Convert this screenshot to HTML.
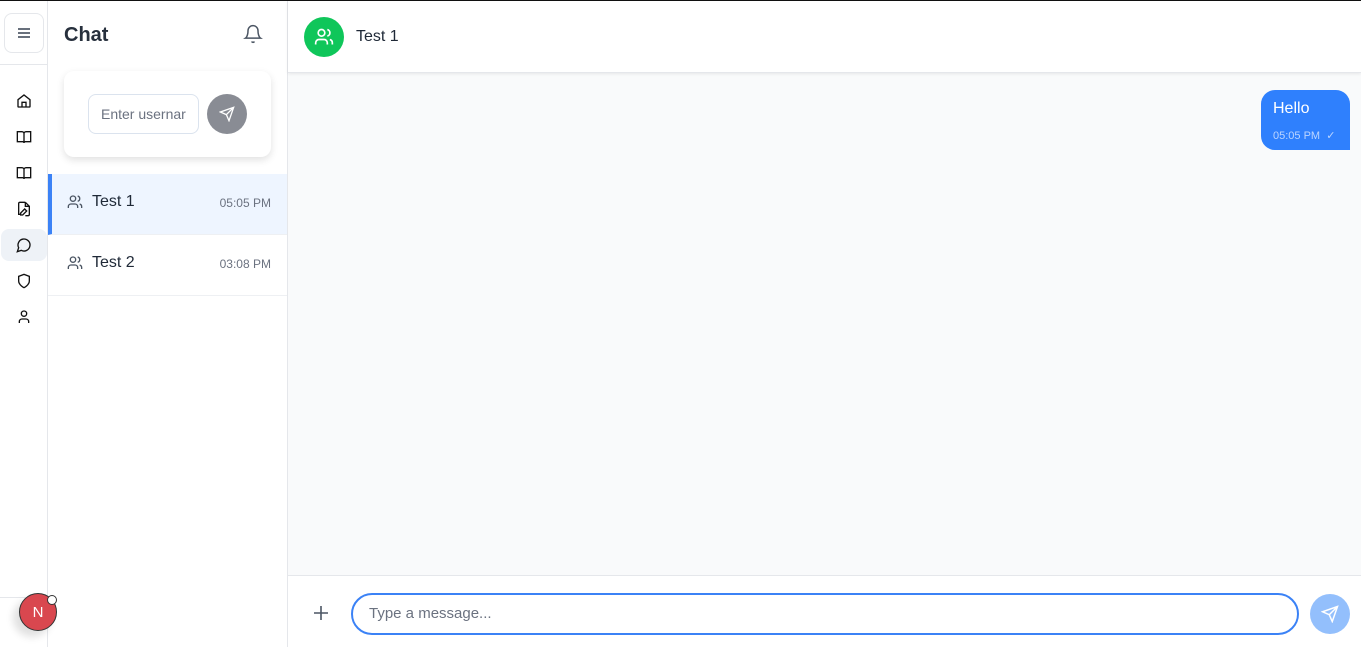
<!DOCTYPE html>
<html><head><meta charset="utf-8"><style>
*{box-sizing:border-box;margin:0;padding:0}
body{width:1361px;height:647px;overflow:hidden;font-family:"Liberation Sans",sans-serif;background:#fff;position:relative;color:#1f2937}
.topline{position:absolute;left:0;top:0;width:1361px;height:1px;background:#111}
.nav{position:absolute;left:0;top:1px;width:48px;height:646px;border-right:1px solid #e5e7eb;background:#fff}
.menu{position:absolute;left:4px;top:12px;width:40px;height:40px;border:1px solid #e5e7eb;border-radius:8px;display:flex;align-items:center;justify-content:center}
.navsep{position:absolute;left:0;top:63px;width:48px;height:1px;background:#e5e7eb}
.ni{position:absolute;left:0;width:48px;height:32px;display:flex;align-items:center;justify-content:center}
.ni.act{background:#eef2f7;border-radius:8px;width:46px;left:1px}
.botsep{position:absolute;left:0;top:596px;width:48px;height:1px;background:#e5e7eb}
.av{position:absolute;left:19px;top:593px;width:38px;height:38px;border-radius:50%;background:#d9474f;border:1px solid #333;color:#fff;font-size:15px;display:flex;align-items:center;justify-content:center;box-shadow:-6px 6px 8px rgba(0,0,0,.12)}
.dot{position:absolute;left:47px;top:595px;width:10px;height:10px;border-radius:50%;background:#fff;border:1px solid #333}
.list{position:absolute;left:48px;top:1px;width:240px;height:646px;border-right:1px solid #e5e7eb}
.title{position:absolute;left:16px;top:23px;font-size:20px;font-weight:bold;color:#27303d}
.bell{position:absolute;left:195px;top:23px}
.card{position:absolute;left:16px;top:70px;width:207px;height:86px;border-radius:10px;background:#fff;box-shadow:0 3px 8px rgba(0,0,0,.12)}
.inp{position:absolute;left:24px;top:23px;width:111px;height:40px;border:1px solid #dbe3ee;border-radius:8px;font-size:14px;color:#6b7280;padding:11px 0 0 12px;white-space:nowrap;overflow:hidden}
.sbtn{position:absolute;left:143px;top:23px;width:40px;height:40px;border-radius:50%;background:#898c94;display:flex;align-items:center;justify-content:center}
.item{position:absolute;left:0;width:239px;height:61px;border-bottom:1px solid #eef0f3}
.item.sel{background:#eef5ff;border-left:4px solid #3b82f6}
.item .nm{position:absolute;left:44px;top:19px;font-size:16px;color:#1f2937}
.item.sel .nm{left:40px}
.item .tm{position:absolute;right:16px;top:22px;font-size:12px;color:#6b7280}
.item .ic{position:absolute;left:19px;top:20px}
.item.sel .ic{left:15px}
.main{position:absolute;left:288px;top:1px;width:1073px;height:646px;background:#f9fafb}
.hdr{position:absolute;left:0;top:0;width:1073px;height:72px;background:#fff;border-bottom:1px solid #e5e7eb;box-shadow:0 1px 3px rgba(0,0,0,.08)}
.gav{position:absolute;left:16px;top:16px;width:40px;height:40px;border-radius:50%;background:#0fc65a;display:flex;align-items:center;justify-content:center}
.hn{position:absolute;left:68px;top:27px;font-size:16px;color:#1f2937}
.bub{position:absolute;left:973px;top:89px;width:89px;height:60px;background:#2f80fd;border-radius:14px 14px 0 14px;color:#fff}
.bub .t{position:absolute;left:12px;top:10px;font-size:16px}
.bub .m{position:absolute;left:12px;top:39px;font-size:11px;color:#bcd5ff}
.foot{position:absolute;left:0;top:574px;width:1073px;height:72px;background:#fff;border-top:1px solid #e5e7eb}
.plus{position:absolute;left:25px;top:29px}
.msg{position:absolute;left:63px;top:17px;width:948px;height:42px;border:2px solid #3b82f6;border-radius:21px;font-size:15px;color:#6b7280;padding:10px 0 0 16px}
.snd{position:absolute;left:1022px;top:18px;width:40px;height:40px;border-radius:50%;background:#93bffc;display:flex;align-items:center;justify-content:center}
</style></head><body>
<div class="topline"></div>
<div class="nav">
 <div class="menu"><svg width="14" height="12" viewBox="0 0 14 12"><path d="M1 2h12M1 6h12M1 10h12" stroke="#374151" stroke-width="1.6"/></svg></div>
 <div class="navsep"></div>
 <div class="ni" style="top:84px"><svg width="16" height="16" viewBox="0 0 24 24" fill="none" stroke="#111" stroke-width="2"><path d="M3 10l9-7 9 7v10a1 1 0 0 1-1 1H4a1 1 0 0 1-1-1z"/><path d="M9 21v-7h6v7"/></svg></div>
 <div class="ni" style="top:120px"><svg width="16" height="16" viewBox="0 0 24 24" fill="none" stroke="#111" stroke-width="2"><path d="M2 4h7a3 3 0 0 1 3 3v14a2 2 0 0 0-2-2H2zM22 4h-7a3 3 0 0 0-3 3v14a2 2 0 0 1 2-2h8z"/></svg></div>
 <div class="ni" style="top:156px"><svg width="16" height="16" viewBox="0 0 24 24" fill="none" stroke="#111" stroke-width="2"><path d="M2 4h7a3 3 0 0 1 3 3v14a2 2 0 0 0-2-2H2zM22 4h-7a3 3 0 0 0-3 3v14a2 2 0 0 1 2-2h8z"/></svg></div>
 <div class="ni" style="top:192px"><svg width="16" height="16" viewBox="0 0 24 24" fill="none" stroke="#111" stroke-width="2"><path d="M14 2H6a2 2 0 0 0-2 2v16h3M14 2l6 6v12a2 2 0 0 1-2 2h-4M14 2v6h6"/><path d="M13 12l3 3-6 6H7v-3z"/></svg></div>
 <div class="ni act" style="top:228px"><svg width="16" height="16" viewBox="0 0 24 24" fill="none" stroke="#111" stroke-width="2"><path d="M7.9 20A9 9 0 1 0 4 16.1L2 22z"/><path d="M8 12h.01M12 12h.01M16 12h.01"/></svg></div>
 <div class="ni" style="top:264px"><svg width="16" height="16" viewBox="0 0 24 24" fill="none" stroke="#111" stroke-width="2"><path d="M12 22s8-4 8-10V5l-8-3-8 3v7c0 6 8 10 8 10z"/></svg></div>
 <div class="ni" style="top:300px"><svg width="16" height="16" viewBox="0 0 24 24" fill="none" stroke="#111" stroke-width="2"><circle cx="12" cy="7" r="4"/><path d="M19 21v-2a4 4 0 0 0-4-4H9a4 4 0 0 0-4 4v2"/></svg></div>
 <div class="botsep"></div>
</div>
<div class="av">N</div><div class="dot"></div>
<div class="list">
 <div class="title">Chat</div>
 <div class="bell"><svg width="20" height="20" viewBox="0 0 24 24" fill="none" stroke="#4b5563" stroke-width="1.8"><path d="M6 8a6 6 0 0 1 12 0c0 7 3 9 3 9H3s3-2 3-9"/><path d="M10.3 21a1.94 1.94 0 0 0 3.4 0"/></svg></div>
 <div class="card">
  <div class="inp">Enter usernar</div>
  <div class="sbtn"><svg width="16" height="16" viewBox="0 0 24 24" fill="none" stroke="#fff" stroke-width="2"><path d="M22 2L11 13M22 2l-7 20-4-9-9-4z"/></svg></div>
 </div>
 <div class="item sel" style="top:173px"><svg class="ic" width="16" height="16" viewBox="0 0 24 24" fill="none" stroke="#4b5563" stroke-width="2"><circle cx="9" cy="7" r="4"/><path d="M16 21v-2a4 4 0 0 0-4-4H6a4 4 0 0 0-4 4v2M16 3.1a4 4 0 0 1 0 7.8M22 21v-2a4 4 0 0 0-3-3.9"/></svg><div class="nm">Test 1</div><div class="tm">05:05 PM</div></div>
 <div class="item" style="top:234px"><svg class="ic" width="16" height="16" viewBox="0 0 24 24" fill="none" stroke="#4b5563" stroke-width="2"><circle cx="9" cy="7" r="4"/><path d="M16 21v-2a4 4 0 0 0-4-4H6a4 4 0 0 0-4 4v2M16 3.1a4 4 0 0 1 0 7.8M22 21v-2a4 4 0 0 0-3-3.9"/></svg><div class="nm">Test 2</div><div class="tm">03:08 PM</div></div>
</div>
<div class="main">
 <div class="hdr">
  <div class="gav"><svg width="20" height="20" viewBox="0 0 24 24" fill="none" stroke="#fff" stroke-width="2"><circle cx="9" cy="7" r="4"/><path d="M16 21v-2a4 4 0 0 0-4-4H6a4 4 0 0 0-4 4v2M16 3.1a4 4 0 0 1 0 7.8M22 21v-2a4 4 0 0 0-3-3.9"/></svg></div>
  <div class="hn">Test 1</div>
 </div>
 <div class="bub"><div class="t">Hello</div><div class="m">05:05 PM &nbsp;✓</div></div>
 <div class="foot">
  <div class="plus"><svg width="16" height="16" viewBox="0 0 16 16"><path d="M8 1v14M1 8h14" stroke="#4b5563" stroke-width="1.6"/></svg></div>
  <div class="msg">Type a message...</div>
  <div class="snd"><svg width="18" height="18" viewBox="0 0 24 24" fill="none" stroke="#fff" stroke-width="2"><path d="M22 2L11 13M22 2l-7 20-4-9-9-4z"/></svg></div>
 </div>
</div>
</body></html>
